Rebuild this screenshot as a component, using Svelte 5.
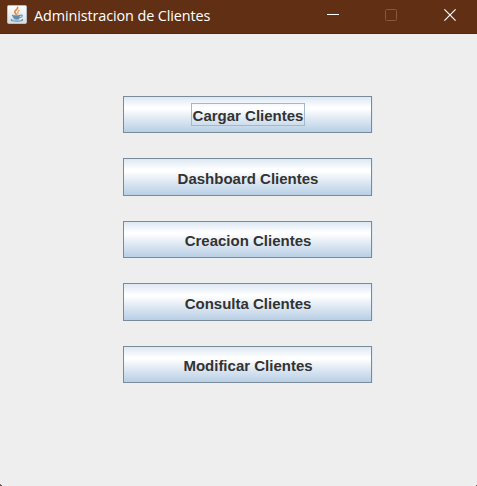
<script>
  const actions = [
    { label: 'Cargar Clientes', focused: true },
    { label: 'Dashboard Clientes', tall: true },
    { label: 'Creacion Clientes' },
    { label: 'Consulta Clientes', tall: true },
    { label: 'Modificar Clientes' }
  ];
</script>

<div class="window">
  <header>
    <svg class="java" width="20" height="19" viewBox="0 0 20 19">
      <defs>
        <linearGradient id="tile" x1="0" y1="0" x2="0" y2="1">
          <stop offset="0" stop-color="#ffffff" />
          <stop offset="1" stop-color="#d3dde3" />
        </linearGradient>
      </defs>
      <rect x="0.5" y="0.5" width="19" height="18" rx="1.2" fill="url(#tile)" stroke="#b9c0c4" />
      <g fill="none" stroke-linecap="round">
        <path d="M10.6 2.4c.8 2-3.7 3.1-2.8 5 .3.8 1 1.1 1.3 1.8" stroke="#e98a35" stroke-width="1.7" />
        <path d="M12.2 5.4c-2.6 1.3-.5 2-1.5 3.7" stroke="#eda062" stroke-width="1.2" />
        <path d="M5.8 10.3c-1.2.8 5 .9 7.2.1M6.4 12c1.8.6 4.5.6 6 0M7.2 13.6c1.5.4 3.5.4 4.7 0" stroke="#5f8caf" stroke-width="1.4" />
        <path d="M13.8 10.1c2.3-.4 1.8 2-.6 2.4" stroke="#5f8caf" stroke-width="1.1" />
        <path d="M4.8 14.6c-2 .9 2 1.6 5.2 1.6s6.4-.7 5.2-1.6" stroke="#6690b2" stroke-width="1.2" />
      </g>
    </svg>
    <h1>Administracion de Clientes</h1>
    <div class="controls">
      <svg width="12" height="12" viewBox="0 0 12 12"><path d="M0 5.5h12" stroke="#fff" /></svg>
      <svg class="maximize" width="12" height="12" viewBox="0 0 12 12"><rect x=".5" y=".5" width="11" height="11" rx="1" fill="none" stroke="#85593f" /></svg>
      <svg width="12" height="12" viewBox="0 0 12 12"><path d="M.4.4l11.2 11.2M11.6.4L.4 11.6" stroke="#fff" stroke-width="1.2" /></svg>
    </div>
  </header>
  <main>
    {#each actions as action}
      <button class:tall={action.tall}>
        <span class:focused={action.focused}>{action.label}</span>
      </button>
    {/each}
  </main>
</div>

<style>
  :global(body) { margin: 0; }
  .window {
    width: 477px;
    height: 486px;
    display: flex;
    flex-direction: column;
    background:
      linear-gradient(#6b5548, #6b5548) 0 100% / 2px 1px no-repeat,
      linear-gradient(#8f7d72, #8f7d72) 0 calc(100% - 1px) / 1px 1px no-repeat,
      linear-gradient(#6b5548, #6b5548) 100% 100% / 1px 1px no-repeat,
      #eeeeee;
    overflow: hidden;
  }
  header {
    box-sizing: border-box;
    height: 34px;
    flex: none;
    display: flex;
    align-items: flex-start;
    padding: 5px 21px 0 7px;
    background: #613014;
    border-bottom: 1px solid #5a2410;
  }
  .java { flex: none; }
  h1 {
    margin: 0 0 0 7px;
    font: 400 14.4px/22px "Open Sans", "Noto Sans", sans-serif;
    letter-spacing: -0.1px;
    color: #fff;
    white-space: nowrap;
  }
  .controls {
    display: flex;
    gap: 46px;
    margin: 4px 0 0 auto;
  }
  .maximize { margin-right: 1px; }
  svg { display: block; }
  main {
    display: flex;
    flex-direction: column;
    gap: 25px;
    padding: 62px 0 0 123px;
  }
  button {
    box-sizing: border-box;
    width: 249px;
    height: 37px;
    padding: 2px 0 0 1px;
    display: flex;
    align-items: center;
    justify-content: center;
    border: 1px solid #7a8a99;
    border-radius: 0;
    background: linear-gradient(#dde8f3 0%, #ffffff 30%, #ffffff 34%, #dce7f2 65%, #b8cfe5 100%);
    box-shadow: 1px 0 #dfe6ed;
    color: #333;
    font: bold 15px/21px "Liberation Sans", Arial, sans-serif;
  }
  .tall { height: 38px; }
  span { white-space: nowrap; }
  .focused {
    margin-top: -3px;
    height: 21px;
    line-height: 24px;
    padding: 0 1px;
    border: 1px solid #a3b8cc;
  }
</style>
